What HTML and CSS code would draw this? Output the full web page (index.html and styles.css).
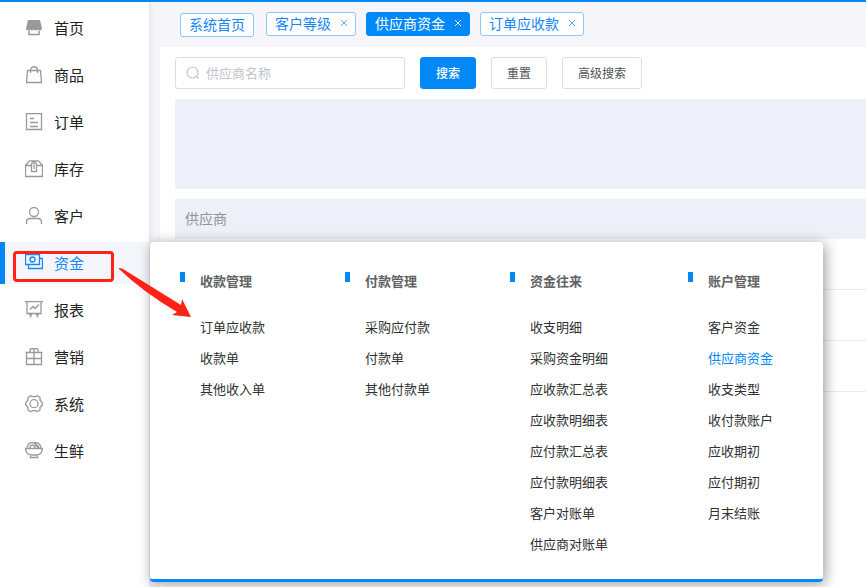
FILE: index.html
```html
<!DOCTYPE html>
<html lang="zh-CN">
<head>
<meta charset="utf-8">
<meta name="viewport" content="width=device-width, initial-scale=1">
<title>供应商资金</title>
<link rel="stylesheet" href="styles.css">
</head>
<body>
<div class="app">
  <nav class="sidebar">
    <a class="nav-item" href="#"><svg class="icon" viewBox="0 0 18 18"><path class="fill" d="M3 1h12l2 8.500q0 2-2 2t-2-1.200q-.7 1.200-2 1.200t-2-1.200q-.8 1.200-2 1.200t-2-1.200Q6 11.500 3.500 11.500 1 11.500 1 9.500z"/><path d="M4 12v3.500h10V12" stroke-width="1.500"/></svg>首页</a>
    <a class="nav-item" href="#"><svg class="icon" viewBox="0 0 18 18"><path d="M2.500 4.500h13l1 12h-15zM5.500 7V4.500C5.500-.5 12.500-.5 12.500 4.500V7"/></svg>商品</a>
    <a class="nav-item" href="#"><svg class="icon" viewBox="0 0 18 18"><path d="M1.500.5h15v16h-15zM5 5.500h4M5 9.500h8M5 13.500h8"/></svg>订单</a>
    <a class="nav-item" href="#"><svg class="icon" viewBox="0 0 18 18"><path d="M.5 5.500L4.500.8h9l4 4.700v11H.5zM.5 5.500h6M11.500 5.500h6M6.500 12V4L8 1M11.500 12V4L10 1M6.500 11.500h5M9 1v8"/></svg>库存</a>
    <a class="nav-item" href="#"><svg class="icon" viewBox="0 0 18 18"><circle cx="9" cy="5" r="4.500"/><path d="M1.500 17v-2q0-3.500 4-3.500h7q4 0 4 3.500v2"/></svg>客户</a>
    <a class="nav-item active" href="#"><svg class="icon" viewBox="0 0 18 18"><path d="M.5.500h14v10H.5zM3.500 11v3.500h14V4.500H15"/><circle cx="7.500" cy="5.500" r="2.500"/></svg>资金</a>
    <a class="nav-item" href="#"><svg class="icon" viewBox="0 0 18 18"><path d="M0 .500h18M2 .500v12h14v-12M5 8.500l3-3 2 2 4-4M7 12.500l-2 4M11 12.500l2 4M4 13.500h3M11 13.500h3"/></svg>报表</a>
    <a class="nav-item" href="#"><svg class="icon" viewBox="0 0 18 18"><path d="M.5 4.500h17M1.500 4.500v12h15v-12M9 4.500v12M1.500 10.500h15M5 4V2.500q0-2 2-2t2 2V4M9 4V2.500q0-2 2-2t2 2V4"/></svg>营销</a>
    <a class="nav-item" href="#"><svg class="icon" viewBox="0 0 18 18"><path d="M5.500.7l2 1h3l2-1L15 2.500V5l2.400 2.800v2L15 12.500V15l-2.500 1.700-2-1h-3l-2 1L3 15v-2.500L.6 9.800v-2L3 5V2.500z" stroke-linejoin="round"/><circle cx="9" cy="8.700" r="4"/></svg>系统</a>
    <a class="nav-item" href="#"><svg class="icon" viewBox="0 0 18 18"><path d="M.5 6.500h17Q17 13 11 13H7Q1 13 .5 6.500zM5.500 13v2.500h7V13M2 6Q3 .500 7 .500t6 5.500M5 6q0-3 2.500-3T10 6M9 .800q6-.8 7 5.200M10 4q3-2 4 2"/></svg>生鲜</a>
  </nav>

  <main class="main">
    <div class="tabs">
      <a class="tab home" href="#">系统首页</a>
      <a class="tab" href="#">客户等级<svg class="close" viewBox="0 0 8 8"><path d="M1 1l6 6M7 1L1 7"/></svg></a>
      <a class="tab current" href="#">供应商资金<svg class="close" viewBox="0 0 8 8"><path d="M1 1l6 6M7 1L1 7"/></svg></a>
      <a class="tab" href="#">订单应收款<svg class="close" viewBox="0 0 8 8"><path d="M1 1l6 6M7 1L1 7"/></svg></a>
    </div>
    <section class="content">
      <form class="filters">
        <label class="search">
          <svg class="search-icon" viewBox="0 0 14 14"><circle cx="6.500" cy="6.500" r="5.500"/><path d="M10.500 10.500l2 2"/></svg>
          <input type="text" placeholder="供应商名称" aria-label="供应商名称">
        </label>
        <button class="btn primary" type="button">搜索</button>
        <button class="btn" type="button">重置</button>
        <button class="btn" type="button">高级搜索</button>
      </form>
      <div class="summary"></div>
      <table class="grid">
        <thead><tr><th>供应商</th></tr></thead>
        <tbody><tr><td></td></tr><tr><td></td></tr><tr><td></td></tr></tbody>
      </table>
    </section>
  </main>

  <div class="flyout">
    <section class="group">
      <h2>收款管理</h2>
      <a href="#">订单应收款</a><a href="#">收款单</a><a href="#">其他收入单</a>
    </section>
    <section class="group">
      <h2>付款管理</h2>
      <a href="#">采购应付款</a><a href="#">付款单</a><a href="#">其他付款单</a>
    </section>
    <section class="group">
      <h2>资金往来</h2>
      <a href="#">收支明细</a><a href="#">采购资金明细</a><a href="#">应收款汇总表</a><a href="#">应收款明细表</a><a href="#">应付款汇总表</a><a href="#">应付款明细表</a><a href="#">客户对账单</a><a href="#">供应商对账单</a>
    </section>
    <section class="group">
      <h2>账户管理</h2>
      <a href="#">客户资金</a><a class="selected" href="#">供应商资金</a><a href="#">收支类型</a><a href="#">收付款账户</a><a href="#">应收期初</a><a href="#">应付期初</a><a href="#">月末结账</a>
    </section>
  </div>

  <div class="mark"></div>
  <svg class="arrow" viewBox="0 0 72 50"><path d="M0 0Q2 0 4 1L62 37l1-6 9 18-19-2 5-3Q24 24 0 1z"/></svg>
</div>
</body>
</html>
```
FILE: styles.css
```css
* { box-sizing: border-box; }

body {
  margin: 0;
  font-family: "Noto Sans CJK SC", sans-serif;
  font-size: 13px;
  color: #303133;
  background: #fff;
}

a { color: inherit; text-decoration: none; }

svg { fill: none; stroke: currentColor; flex: none; }

.app {
  position: relative;
  display: flex;
  min-height: 100vh;
  border-top: 2px solid #0389f7;
  overflow: hidden;
}

.sidebar {
  position: relative;
  flex: none;
  width: 149px;
  padding-top: 5px;
  display: flex;
  flex-direction: column;
  gap: 5px;
  background: #fff;
  box-shadow: 0 0 6px rgba(0, 0, 0, 0.12);
}

.nav-item {
  display: flex;
  align-items: center;
  gap: 11px;
  height: 42px;
  padding: 0 0 2px 20px;
  border-left: 5px solid transparent;
  font-size: 15px;
  color: #222;
}

.nav-item.active {
  border-left-color: #0389f7;
  background: #f5f6fb;
  color: #1687f5;
}

.icon { width: 18px; height: 18px; margin-top: 2px; color: #999; stroke-width: 1.3; }
.icon .fill { fill: currentColor; stroke: none; }
.active .icon { color: #1687f5; }

.main {
  flex: 1;
  min-width: 0;
  display: flex;
  flex-direction: column;
  padding-left: 11px;
  background: #f5f5fa;
}

.tabs {
  display: flex;
  align-items: center;
  gap: 10px;
  height: 45px;
  padding: 0 0 1px 20px;
}

.tab {
  display: flex;
  align-items: center;
  height: 24px;
  padding: 0 8px 2px;
  border: 1px solid #8cc8fa;
  border-radius: 3px;
  background: #fff;
  color: #1687f5;
  font-size: 14px;
  white-space: nowrap;
}

.tab.home { margin: 2px 2px 0 0; }
.tab.current { background: #0389f7; border-color: #0389f7; color: #fff; }
.close { width: 8px; height: 8px; margin-left: 9px; margin-right: -1px; opacity: 0.7; }
.current .close { opacity: 1; }

.content { flex: 1; padding: 10px 0 0 15px; background: #fff; }

.filters { display: flex; gap: 15px; }

.search {
  display: flex;
  align-items: center;
  gap: 6px;
  width: 230px;
  height: 32px;
  padding: 0 10px;
  border: 1px solid #dcdfe6;
  border-radius: 3px;
  color: #c0c4cc;
}

.search-icon { width: 14px; height: 14px; stroke-width: 1.2; }

.search input {
  flex: 1;
  min-width: 0;
  padding: 0 0 2px;
  border: 0;
  outline: 0;
  font: inherit;
  color: #606266;
}

.search input::placeholder { color: #c0c4cc; }

.btn {
  height: 32px;
  padding: 0 15px 2px;
  border: 1px solid #dcdfe6;
  border-radius: 3px;
  background: #fff;
  color: #505256;
  font-family: inherit;
  font-size: 12px;
}

.btn.primary { background: #0389f7; border-color: #0389f7; color: #fff; font-weight: 500; }

.summary { height: 90px; margin: 10px 0; background: #edf0f9; }

.grid { width: 100%; border-spacing: 0; }

.grid th {
  height: 40px;
  padding: 0 10px 2px;
  background: #edf0f9;
  color: #909399;
  font-size: 14px;
  font-weight: 400;
  text-align: left;
}

.grid td { height: 51px; padding: 0; border-bottom: 1px solid #e9ebf3; }

.flyout {
  position: absolute;
  left: 150px;
  top: 240px;
  display: flex;
  gap: 80px;
  padding: 30px 50px 20px 30px;
  border-bottom: 3px solid #0389f7;
  border-radius: 4px;
  background: #fff;
  box-shadow: 2px 2px 14px rgba(0, 0, 0, 0.4);
}

.group { display: flex; flex-direction: column; padding-left: 20px; }

.group h2 {
  position: relative;
  margin: 0 0 21px;
  font-size: 13px;
  line-height: 18px;
  font-weight: 700;
  color: #606266;
}

.group h2::before {
  content: "";
  position: absolute;
  left: -20px;
  top: 0;
  width: 5px;
  height: 10px;
  background: #0389f7;
}

.group a { line-height: 31px; white-space: nowrap; }
.group a.selected { color: #0389f7; }

.mark {
  position: absolute;
  left: 13px;
  top: 249px;
  width: 101px;
  height: 31px;
  border: 3px solid #ff2317;
  border-radius: 4px;
  pointer-events: none;
}

.arrow {
  position: absolute;
  left: 119px;
  top: 266px;
  width: 72px;
  height: 50px;
  fill: #ff2317;
  stroke: none;
  pointer-events: none;
}
```
